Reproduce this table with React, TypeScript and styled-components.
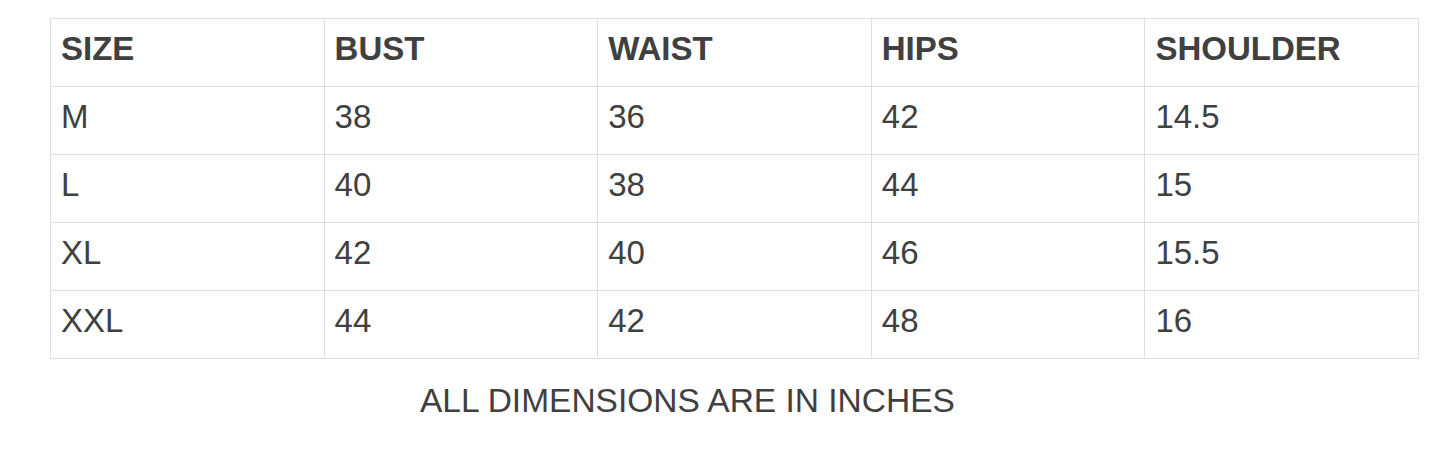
import React from 'react';
import styled, { createGlobalStyle } from 'styled-components';

const GlobalStyle = createGlobalStyle`
  body {
    margin: 0;
    background: #ffffff;
    font-family: "Liberation Sans", Arial, sans-serif;
    color: #404040;
  }
`;

const Page = styled.div`
  padding: 18px 0 0 50px;
`;

const Table = styled.table`
  width: 1369px;
  table-layout: fixed;
  border-collapse: collapse;
`;

const Cell = styled.td<{ $head?: boolean }>`
  height: 60px;
  padding: 0 0 7px 10px;
  border: 1px solid #dedede;
  font-size: 33px;
  font-weight: ${p => (p.$head ? 700 : 400)};
  color: #404040;
  vertical-align: middle;
  text-align: left;
`;

const Note = styled.div`
  margin: 23px 0 0 370px;
  font-size: 33.5px;
  color: #404040;
  line-height: 38px;
`;

const head = ['SIZE', 'BUST', 'WAIST', 'HIPS', 'SHOULDER'];
const rows = [
  ['M', '38', '36', '42', '14.5'],
  ['L', '40', '38', '44', '15'],
  ['XL', '42', '40', '46', '15.5'],
  ['XXL', '44', '42', '48', '16'],
];

function App() {
  return (
    <>
      <GlobalStyle />
      <Page>
        <Table>
          <tbody>
            <tr>
              {head.map(h => (
                <Cell key={h} $head>{h}</Cell>
              ))}
            </tr>
            {rows.map(r => (
              <tr key={r[0]}>
                {r.map((v, i) => (
                  <Cell key={i}>{v}</Cell>
                ))}
              </tr>
            ))}
          </tbody>
        </Table>
        <Note>ALL DIMENSIONS ARE IN INCHES</Note>
      </Page>
    </>
  );
}

export default App;
